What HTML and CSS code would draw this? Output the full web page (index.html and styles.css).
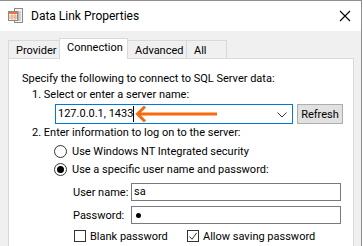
FILE: index.html
```html
<!DOCTYPE html>
<html lang="en">
<head>
  <meta charset="UTF-8">
  <title>Data Link Properties</title>
  <link rel="stylesheet" href="styles.css">
</head>
<body>

  <div class="window">
    <div class="titlebar">
      <svg class="app-icon" width="16" height="16" viewBox="0 0 16 16">
        <rect x="6.5" y="0.5" width="8" height="14" fill="#f4f4f4" stroke="#8a8a8a"/>
        <path d="M8 4h5M8 6h5M8 8h5M8 10h5M8 12h5" stroke="#b0b0b0"/>
        <path d="M10.5 3v10" stroke="#b0b0b0"/>
        <rect x="0.5" y="3.5" width="9" height="9" fill="#fff" stroke="#8a8a8a"/>
        <rect x="1" y="4" width="8" height="2" fill="#e8783c"/>
        <path d="M1 8h8M1 10h8M4 6v6M7 6v6" stroke="#e8a070"/>
      </svg>
      <span class="title">Data Link Properties</span>
      <svg class="close" width="12" height="12" viewBox="0 0 12 12">
        <path d="M1 1l10 10M11 1L1 11" stroke="#000" stroke-width="1.1"/>
      </svg>
    </div>

    <div class="content">
      <div class="tabs">
        <div class="tab tab-provider">Provider</div>
        <div class="tab tab-connection active">Connection</div>
        <div class="tab tab-advanced">Advanced</div>
        <div class="tab tab-all">All</div>
      </div>

      <div class="panel">
        <div class="line intro">Specify the following to connect to SQL Server data:</div>
        <div class="line step">1. Select or enter a server name:</div>

        <div class="server-row">
          <div class="combo">
            <span class="combo-text">127.0.0.1, 1433</span><span class="caret"></span>
            <svg class="arrow" width="84" height="18" viewBox="0 0 84 18">
              <path d="M82 9H4" stroke="#f86b0c" stroke-width="3"/>
              <path d="M10 1.5L2.5 9L10 16.5" fill="none" stroke="#f86b0c" stroke-width="3"/>
            </svg>
            <svg class="chevron" width="10" height="6" viewBox="0 0 10 6">
              <path d="M0.5 0.5l4.5 4.5l4.5-4.5" fill="none" stroke="#333"/>
            </svg>
          </div>
          <button class="btn">Refresh</button>
        </div>

        <div class="line step step-two">2. Enter information to log on to the server:</div>

        <label class="option">
          <span class="radio"></span>
          Use Windows NT Integrated security
        </label>
        <label class="option">
          <span class="radio checked"></span>
          Use a specific user name and password:
        </label>

        <div class="field field-user">
          <span class="field-label">User name:</span>
          <div class="textbox">sa</div>
        </div>
        <div class="field field-pass">
          <span class="field-label">Password:</span>
          <div class="textbox"><span class="dot"></span></div>
        </div>

        <div class="checks">
          <label class="check check-blank">
            <span class="box"></span>
            Blank password
          </label>
          <label class="check">
            <span class="box ticked">
              <svg width="11" height="11" viewBox="0 0 11 11">
                <path d="M1.5 5.5l3 3l5-7" fill="none" stroke="#333" stroke-width="1.1"/>
              </svg>
            </span>
            Allow saving password
          </label>
        </div>
      </div>
    </div>
  </div>

</body>
</html>
```

FILE: styles.css
```css
* {
  box-sizing: border-box;
}
body {
  margin: 0;
  font-family: Roboto, 'Liberation Sans', sans-serif;
  font-size: 11px;
  color: #000;
  background: #fff;
  overflow: hidden;
}
.window {
  width: 362px;
  height: 246px;
  border-top: 1px solid #8f8f8f;
  border-right: 1px solid #8f8f8f;
  overflow: hidden;
  display: flex;
  flex-direction: column;
  white-space: nowrap;
}

/* title bar */
.titlebar {
  height: 30px;
  flex-shrink: 0;
  background: #fff;
  display: flex;
  align-items: center;
  padding-left: 8px;
}
.app-icon {
  margin-top: -1px;
}
.title {
  margin-left: 7px;
  font-size: 12px;
  flex: 1;
}
.close {
  margin-right: 10px;
}

/* body */
.content {
  flex: 1 0 auto;
  background: #f0f0f0;
  padding: 7px 8px 0 8px;
}
.tabs {
  display: flex;
  align-items: flex-end;
  height: 20px;
  position: relative;
  z-index: 1;
}
.tab {
  height: 18px;
  border: 1px solid #d9d9d9;
  border-bottom: none;
  background: #f0f0f0;
  line-height: 19px;
  padding-left: 7px;
}
.tab + .tab {
  margin-left: -1px;
}
.tab-provider { width: 52px; }
.tab-connection { width: 69px; }
.tab-advanced { width: 60px; }
.tab-all { width: 41px; }
.tab.active {
  height: 21px;
  margin-bottom: -1px;
  background: #fff;
  line-height: 18px;
}
.panel {
  background: #fff;
  border: 1px solid #d9d9d9;
  width: 346px;
  height: 200px;
  padding-left: 13px;
}

.line {
  height: 16px;
  line-height: 16px;
}
.intro {
  margin-top: 12px;
}
.step {
  padding-left: 10px;
}
.step-two {
  margin-top: 1px;
}

.server-row {
  display: flex;
  margin-top: 1px;
  margin-left: 33px;
  height: 20px;
}
.combo {
  width: 238px;
  border: 1px solid #0078d7;
  display: flex;
  align-items: center;
  padding-left: 2px;
  position: relative;
}
.combo-text {
  line-height: 16px;
}
.caret {
  width: 1px;
  height: 16px;
  background: #000;
}
.arrow {
  position: absolute;
  left: 79px;
  top: 0;
}
.chevron {
  position: absolute;
  right: 5px;
  top: 7px;
}
.btn {
  margin-left: 4px;
  width: 46px;
  height: 20px;
  border: 1px solid #adadad;
  background: #e1e1e1;
  font: inherit;
  padding: 0;
  color: #000;
}

.option {
  display: flex;
  align-items: center;
  height: 16px;
  margin-top: 2px;
  padding-left: 32px;
}
.radio {
  width: 13px;
  height: 13px;
  border: 1px solid #333;
  border-radius: 50%;
  margin-right: 5px;
  display: flex;
  align-items: center;
  justify-content: center;
}
.radio.checked::after {
  content: "";
  width: 7px;
  height: 7px;
  border-radius: 50%;
  background: #000;
}

.field {
  display: flex;
  align-items: center;
  padding-left: 51px;
}
.field-user {
  margin-top: 6px;
}
.field-pass {
  margin-top: 5px;
}
.field-label {
  width: 58px;
}
.textbox {
  width: 210px;
  height: 18px;
  border: 1px solid #7a7a7a;
  padding-left: 2px;
  line-height: 16px;
  display: flex;
  align-items: center;
}
.dot {
  width: 5px;
  height: 5px;
  border-radius: 50%;
  background: #000;
  margin-left: 2px;
}

.checks {
  display: flex;
  margin-top: 4px;
  padding-left: 52px;
  height: 16px;
}
.check {
  display: flex;
  align-items: center;
}
.check-blank {
  width: 113px;
}
.box {
  width: 12px;
  height: 12px;
  border: 1px solid #333;
  margin-right: 4px;
  display: flex;
  align-items: center;
  justify-content: center;
}
```
